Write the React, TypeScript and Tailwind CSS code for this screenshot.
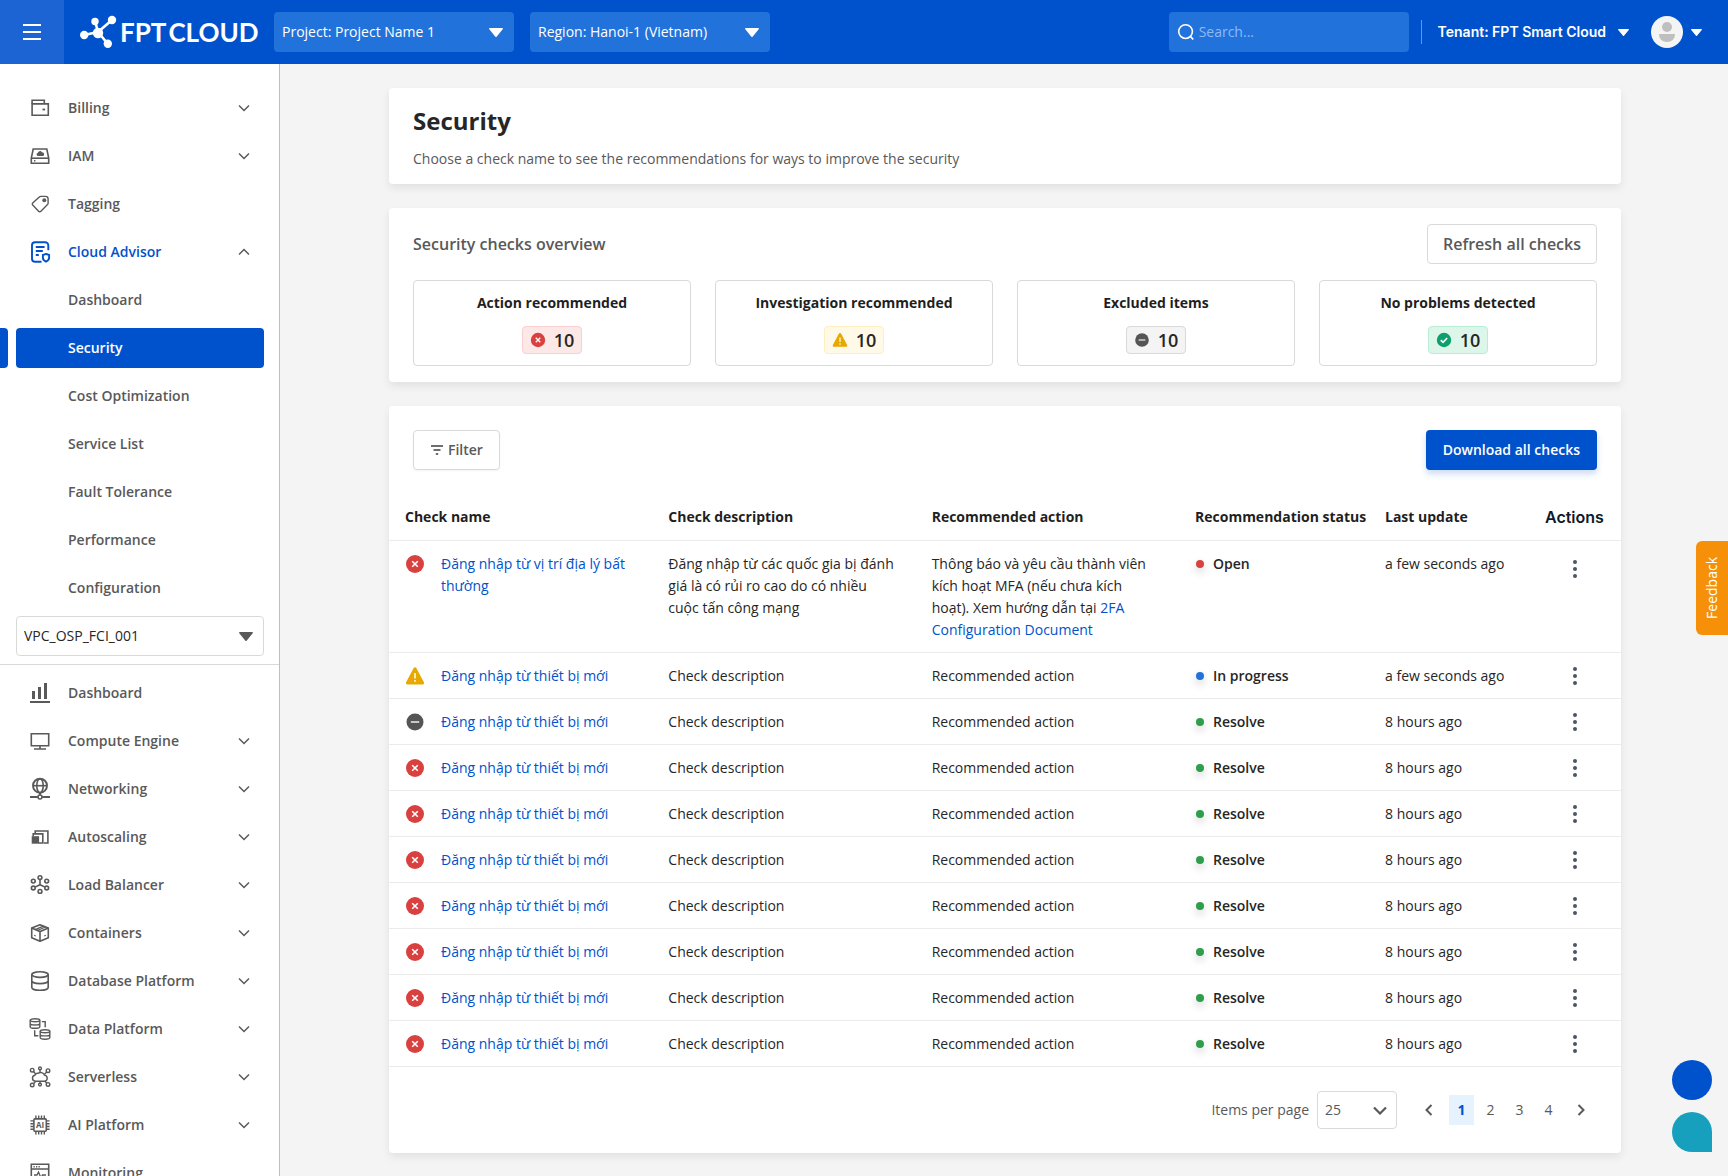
import { useState } from "react";
import type { ReactNode } from "react";

type Level = "error" | "warning" | "excluded" | "ok";
type Status = "Open" | "In progress" | "Resolve";

interface ICheck {
  id: number;
  level: Level;
  name: string;
  description: string;
  action: ReactNode;
  status: Status;
  updated: string;
  tall?: boolean;
}

interface INavItem {
  label: string;
  icon: ReactNode;
  expandable?: boolean;
}

/*********** Sidebar icons ****************/
const NavIcon = ({ children }: { children: ReactNode }) => (
  <svg
    width="24"
    height="24"
    viewBox="0 0 24 24"
    fill="none"
    stroke="currentColor"
    strokeWidth="1.6"
    className="shrink-0"
    aria-hidden="true"
  >
    {children}
  </svg>
);

const BillingIcon = () => (
  <NavIcon>
    <path d="M4.1 7.8V4.2h12.2v3.4" />
    <path d="M4.1 7.9h16.2v11.3H4.1z" />
    <path d="M14.5 12.6h2.6v1.8h-2.6z" fill="currentColor" stroke="none" />
  </NavIcon>
);

const IamIcon = () => (
  <NavIcon>
    <path d="M5.2 5h13.6l1.9 9.2v5H3.3v-5z" />
    <path d="M3.3 14.2h17.4" />
    <path
      d="M9.9 12a1.6 1.6 0 0 1-.2-3.1 2.3 2.3 0 0 1 4.3-.5 1.8 1.8 0 0 1 .6 3.6z"
      fill="currentColor"
      stroke="none"
    />
    <path d="M6 16.7h1.4" />
  </NavIcon>
);

const TagIcon = () => (
  <NavIcon>
    <path d="M12.9 4.4h4.6a2.6 2.6 0 0 1 2.6 2.6v4.2a2 2 0 0 1-.6 1.4l-6.6 6.7a1.6 1.6 0 0 1-2.3 0l-5.9-6.2a1.4 1.4 0 0 1 0-2L11.3 5.1a2.2 2.2 0 0 1 1.6-.7z" strokeWidth="1.4" />
    <circle cx="16.3" cy="8.2" r="2" fill="currentColor" stroke="none" />
  </NavIcon>
);

const AdvisorIcon = () => (
  <NavIcon>
    <g strokeWidth="1.9">
      <path d="M20.3 10.2V5.2a3 3 0 0 0-3-3H7a3 3 0 0 0-3 3v13.6a3 3 0 0 0 3 3h6.5" />
      <path d="M7.8 7h8.8M7.8 11h7M7.8 15h3" />
      <path d="M18 13.9l3.1 1.1v2.8c0 1.9-1.4 3.1-3.1 3.9-1.7-.8-3.1-2-3.1-3.9V15z" />
    </g>
  </NavIcon>
);

const BarsIcon = () => (
  <NavIcon>
    <path
      d="M4 10h3v8H4zM10 6h3v12h-3zM16 2h3v16h-3zM2 20h20v2H2z"
      fill="currentColor"
      stroke="none"
    />
  </NavIcon>
);

const MonitorIcon = () => (
  <NavIcon>
    <path d="M3.3 4.7h17.4v12H3.3z" />
    <path d="M12 16.7v3M6 20h12" />
  </NavIcon>
);

const NetworkIcon = () => (
  <NavIcon>
    <circle cx="12" cy="8.7" r="7" strokeWidth="1.9" />
    <ellipse cx="12" cy="8.7" rx="3.2" ry="7" />
    <path d="M5 8.7h14" />
    <path d="M12 15.7V18M2 20h7.8M14.2 20H22" strokeWidth="1.9" />
    <circle cx="12" cy="20" r="2" />
  </NavIcon>
);

const ScalingIcon = () => (
  <NavIcon>
    <path d="M7.2 8.5V6h12.7v12h-4.2" />
    <path d="M5.2 11.5V8.9h9.6V18h-4" />
    <path d="M3.7 11.2h7.4v7.5H3.7z" fill="currentColor" stroke="none" />
  </NavIcon>
);

const BalancerIcon = () => (
  <NavIcon>
    <circle cx="12" cy="4.6" r="1.9" />
    <circle cx="5.3" cy="8.1" r="1.9" />
    <circle cx="18.7" cy="8.1" r="1.9" />
    <circle cx="5.3" cy="15" r="1.9" />
    <circle cx="18.7" cy="15" r="1.9" />
    <circle cx="12" cy="18.4" r="1.9" />
    <path d="M12 6.5v5.2M7 14.1l5-2.4 5 2.4" />
  </NavIcon>
);

const ContainerIcon = () => (
  <NavIcon>
    <path d="M12 3.7l8.3 3.4v9.6L12 20.3l-8.3-3.600V7.100z" strokeLinejoin="round" />
    <path d="M3.700 7.100l8.300 3.500 8.300-3.500M12 10.600v9.700" />
    <path d="M7.200 8.700l8.200-3.500M9.300 9.500l8.200-3.500" strokeWidth="1.300" />
    <path d="M6.200 14.300l1.500.7M17.800 14.300l-1.500.7" strokeWidth="1.200" />
  </NavIcon>
);

const DatabaseIcon = () => (
  <NavIcon>
    <ellipse cx="12" cy="5.600" rx="8.200" ry="2.800" />
    <path d="M3.800 5.600v12.800c0 1.600 3.700 2.800 8.200 2.800s8.200-1.200 8.200-2.800V5.600M3.800 11.800c0 1.600 3.700 2.800 8.200 2.800s8.200-1.200 8.200-2.800" />
  </NavIcon>
);

const DataPlatformIcon = () => (
  <NavIcon>
    <g strokeWidth="1.400">
      <ellipse cx="7" cy="3.300" rx="4.800" ry="1.500" />
      <path d="M2.200 3.300v6.400c0 .9 2.100 1.600 4.800 1.600s4.800-.7 4.800-1.600V3.300M2.200 6.500C2.200 7.400 4.300 8 7 8s4.800-.6 4.800-1.500" />
      <ellipse cx="17" cy="14.200" rx="4.800" ry="1.500" />
      <path d="M12.200 14.200v6.400c0 .9 2.100 1.600 4.800 1.600s4.800-.7 4.800-1.600v-6.400M12.200 17.400c0 .9 2.100 1.500 4.800 1.500s4.800-.6 4.800-1.500" />
      <path d="M13.800 4.600h3.400v5.700M6.700 13.200v5.600h3.600" />
    </g>
  </NavIcon>
);

const ServerlessIcon = () => (
  <NavIcon>
    <g strokeWidth="1.400">
      <path d="M7.200 16.200a3 3 0 0 1-.4-5.900 3 3 0 0 1 3.400-2 4 4 0 0 1 6.200 1.800 3.100 3.100 0 0 1 .4 6.100z" />
      <circle cx="4.200" cy="5.200" r="1.800" />
      <circle cx="12" cy="3.400" r="1.400" />
      <circle cx="20" cy="5.700" r="1.800" />
      <circle cx="4.200" cy="20" r="1.800" />
      <circle cx="12" cy="19.600" r="1.400" />
      <circle cx="20" cy="19.400" r="1.800" />
      <path d="M5.500 6.500l2 2.300M12 4.800v3M18.800 7l-2.300 2.200M5.500 18.700l2.200-2.500M12 18.200v-2M18.700 18.100l-2-2" />
    </g>
  </NavIcon>
);

const AiIcon = () => (
  <NavIcon>
    <rect x="5.900" y="5.900" width="12.400" height="12.400" rx="1" />
    <path
      d="M7.900 5.500V2.600M10.700 5.500V2.600M13.500 5.500V2.600M16.300 5.500V2.600M7.900 21.600v-3M10.700 21.600v-3M13.500 21.600v-3M16.300 21.600v-3M2.400 7.900h3M2.400 10.700h3M2.400 13.500h3M2.400 16.300h3M18.600 7.900h3M18.600 10.700h3M18.600 13.500h3M18.600 16.300h3"
      strokeWidth="1.400"
    />
    <text
      x="12.100"
      y="14.900"
      textAnchor="middle"
      fontSize="8"
      fontWeight="700"
      fontFamily="Open Sans"
      fill="currentColor"
      stroke="none"
    >
      AI
    </text>
  </NavIcon>
);

const MonitoringIcon = () => (
  <NavIcon>
    <path d="M3.300 3.300h17.400v17.400H3.300zM3.300 8h17.400" />
    <path d="M5.500 5.700h1.300M8 5.700h1.300M10.500 5.700h1.300" />
    <path d="M6 14h3l1.500-3 2.500 6 1.500-3H18" strokeWidth="1.300" />
  </NavIcon>
);

/*********** Shared glyphs ****************/
const Caret = ({ small, className = "" }: { small?: boolean; className?: string }) => (
  <svg
    width={small ? 11 : 14}
    height={small ? 7 : 9}
    viewBox="0 0 14 8"
    preserveAspectRatio="none"
    fill="currentColor"
    className={className}
    aria-hidden="true"
  >
    <path d="M.8 0h12.4c.7 0 1 .7.5 1.200L7.600 7.700a.8.8 0 0 1-1.200 0L.3 1.200C-.2.700.1 0 .8 0z" />
  </svg>
);

const Chevron = ({ up }: { up?: boolean }) => (
  <svg
    width="12"
    height="8"
    viewBox="0 0 12 8"
    fill="none"
    stroke="#595959"
    strokeWidth="1.500"
    className="shrink-0"
    aria-hidden="true"
  >
    <path d={up ? "M1 6.500l5-5 5 5" : "M1 1.500l5 5 5-5"} />
  </svg>
);

const LevelIcon = ({ level, size }: { level: Level; size: number }) => (
  <svg width={size} height={size} viewBox="0 0 20 20" className="shrink-0" aria-hidden="true">
    {level === "error" && (
      <>
        <circle cx="10" cy="10" r="9" fill="#d94141" />
        <path d="M7.200 7.200l5.600 5.600M12.800 7.200l-5.600 5.600" stroke="#fff" strokeWidth="1.600" />
      </>
    )}
    {level === "warning" && (
      <>
        <path
          d="M8.700 1.900a1.500 1.500 0 0 1 2.600 0l7.600 14.400a1.500 1.500 0 0 1-1.300 2.200H2.400a1.500 1.500 0 0 1-1.300-2.200z"
          fill="#e9a800"
        />
        <path d="M10 7v5.500M10 14v1.800" stroke="#fff" strokeWidth="1.500" />
      </>
    )}
    {level === "excluded" && (
      <>
        <circle cx="10" cy="10" r="8.500" fill="#555" />
        <path d="M5.800 10h8.400" stroke="#c8c8c8" strokeWidth="2" />
      </>
    )}
    {level === "ok" && (
      <>
        <circle cx="10" cy="10" r="9" fill="#0f9f6e" />
        <path d="M6 10.200l2.800 2.800 5.200-5.500" fill="none" stroke="#fff" strokeWidth="2" />
      </>
    )}
  </svg>
);

const Logo = () => (
  <a href="#home" className="flex items-center gap-0.5 text-white">
    <svg width="38" height="34" viewBox="0 0 38 34" fill="currentColor" aria-hidden="true">
      <path
        d="M18 17L4.200 20M18 17L15 6M18 17L32 5M18 17l9.500 11.500"
        stroke="currentColor"
        strokeWidth="2.600"
      />
      <circle cx="4.200" cy="20" r="4.200" />
      <circle cx="15" cy="6.500" r="3.700" />
      <circle cx="32" cy="5" r="4.200" />
      <circle cx="27.800" cy="28.800" r="4.200" />
      <circle cx="18" cy="18" r="5.200" />
    </svg>
    <span className="flex gap-0.5 font-['Lato',sans-serif] text-[26px] leading-8 font-bold">
      <span>FPT</span>
      <span>CLOUD</span>
    </span>
  </a>
);

/*********** Data ****************/
const topNav: INavItem[] = [
  { label: "Billing", icon: <BillingIcon />, expandable: true },
  { label: "IAM", icon: <IamIcon />, expandable: true },
  { label: "Tagging", icon: <TagIcon /> },
];

const advisorNav = [
  "Dashboard",
  "Security",
  "Cost Optimization",
  "Service List",
  "Fault Tolerance",
  "Performance",
  "Configuration",
];

const vpcNav: INavItem[] = [
  { label: "Dashboard", icon: <BarsIcon /> },
  { label: "Compute Engine", icon: <MonitorIcon />, expandable: true },
  { label: "Networking", icon: <NetworkIcon />, expandable: true },
  { label: "Autoscaling", icon: <ScalingIcon />, expandable: true },
  { label: "Load Balancer", icon: <BalancerIcon />, expandable: true },
  { label: "Containers", icon: <ContainerIcon />, expandable: true },
  { label: "Database Platform", icon: <DatabaseIcon />, expandable: true },
  { label: "Data Platform", icon: <DataPlatformIcon />, expandable: true },
  { label: "Serverless", icon: <ServerlessIcon />, expandable: true },
  { label: "AI Platform", icon: <AiIcon />, expandable: true },
  { label: "Monitoring", icon: <MonitoringIcon /> },
];

const summary: { label: string; level: Level; count: number; badge: string }[] = [
  { label: "Action recommended", level: "error", count: 10, badge: "bg-[#fde8e8] border-[#f9d0d0]" },
  { label: "Investigation recommended", level: "warning", count: 10, badge: "bg-[#fff9e8] border-[#ffeec0]" },
  { label: "Excluded items", level: "excluded", count: 10, badge: "bg-[#f4f4f4] border-[#d9d9d9]" },
  { label: "No problems detected", level: "ok", count: 10, badge: "bg-[#dcf7ea] border-[#b8eed6]" },
];

const simpleCheck = (id: number, level: Level, status: Status, updated: string): ICheck => ({
  id,
  level,
  name: "Đăng nhập từ thiết bị mới",
  description: "Check description",
  action: "Recommended action",
  status,
  updated,
});

const checks: ICheck[] = [
  {
    id: 1,
    level: "error",
    name: "Đăng nhập từ vị trí địa lý bất thường",
    description: "Đăng nhập từ các quốc gia bị đánh giá là có rủi ro cao do có nhiều cuộc tấn công mạng",
    action: (
      <>
        Thông báo và yêu cầu thành viên kích hoạt MFA (nếu chưa kích hoạt). Xem hướng dẫn tại{" "}
        <a href="#2fa" className="text-[#0052cc]">
          2FA Configuration Document
        </a>
      </>
    ),
    status: "Open",
    updated: "a few seconds ago",
    tall: true,
  },
  simpleCheck(2, "warning", "In progress", "a few seconds ago"),
  simpleCheck(3, "excluded", "Resolve", "8 hours ago"),
  simpleCheck(4, "error", "Resolve", "8 hours ago"),
  simpleCheck(5, "error", "Resolve", "8 hours ago"),
  simpleCheck(6, "error", "Resolve", "8 hours ago"),
  simpleCheck(7, "error", "Resolve", "8 hours ago"),
  simpleCheck(8, "error", "Resolve", "8 hours ago"),
  simpleCheck(9, "error", "Resolve", "8 hours ago"),
  simpleCheck(10, "error", "Resolve", "8 hours ago"),
];

const dotColor: Record<Status, string> = {
  Open: "bg-[#d94141]",
  "In progress": "bg-[#2272db]",
  Resolve: "bg-[#2e9e4b]",
};

/*********** Header ****************/
const HeaderSelect = ({ label, value }: { label: string; value: string }) => (
  <div className="relative w-60 shrink-0">
    <select
      aria-label={label}
      className="h-10 w-full appearance-none rounded bg-[#2272db] pr-8 pl-2 text-sm text-white"
    >
      <option>{value}</option>
    </select>
    <Caret className="pointer-events-none absolute top-4 right-[11px] text-white" />
  </div>
);

const Header = () => (
  <header className="flex h-16 shrink-0 items-center bg-[#0052cc]">
    <button aria-label="Menu" className="flex size-16 shrink-0 items-center justify-center bg-[#1c63d3]">
      <svg width="18" height="16" viewBox="0 0 18 16" fill="#fff" aria-hidden="true">
        <path d="M0 0h18v2H0zM0 7h18v2H0zM0 14h18v2H0z" />
      </svg>
    </button>
    <div className="flex w-[210px] shrink-0 items-center pl-4">
      <Logo />
    </div>
    <div className="flex gap-4">
      <HeaderSelect label="Project" value="Project: Project Name 1" />
      <HeaderSelect label="Region" value="Region: Hanoi-1 (Vietnam)" />
    </div>
    <div className="ml-auto flex items-center pr-[26px]">
      <label className="flex h-10 w-60 items-center gap-1 rounded bg-[#2272db] px-2">
        <svg width="20" height="20" viewBox="0 0 20 20" fill="none" stroke="#fff" strokeWidth="1.700" aria-hidden="true">
          <circle cx="9.500" cy="9.500" r="7.600" />
          <path d="M15 15l3 3.300" strokeWidth="2" />
        </svg>
        <input
          type="text"
          aria-label="Search"
          placeholder="Search..."
          className="w-full bg-transparent text-sm text-white outline-none placeholder:text-[#8dbaf5]"
        />
      </label>
      <span className="ml-3 h-6 w-px bg-[#5c9bec]" />
      <button className="ml-4 flex items-center gap-3 font-['Inter',sans-serif] text-sm font-semibold text-white">
        Tenant: FPT Smart Cloud
        <Caret small />
      </button>
      <button aria-label="Account" className="ml-[22px] flex items-center gap-2 text-white">
        <svg width="32" height="32" viewBox="0 0 32 32" aria-hidden="true">
          <circle cx="16" cy="16" r="16" fill="#f4f4f4" />
          <circle cx="16" cy="11" r="5" fill="#bfbfbf" />
          <path d="M8.500 18h15c.3 0 .5.200.5.500 0 4.500-3.500 7.500-8 7.500s-8-3-8-7.500c0-.3.200-.5.500-.5z" fill="#bfbfbf" />
        </svg>
        <Caret small />
      </button>
    </div>
  </header>
);

/*********** Sidebar ****************/
const NavRow = ({ item }: { item: INavItem }) => (
  <a href={`#${item.label}`} className="flex h-12 shrink-0 items-center pr-[29px] pl-7">
    {item.icon}
    <span className="ml-4 flex-1">{item.label}</span>
    {item.expandable && <Chevron />}
  </a>
);

const Sidebar = () => {
  const [active, setActive] = useState("Security");
  return (
    <aside className="flex w-[280px] shrink-0 flex-col overflow-y-auto border-r border-[#bfbfbf] bg-white pt-5 text-sm font-semibold text-[#595959] [scrollbar-width:none]">
      <nav className="flex flex-col">
        {topNav.map((item) => (
          <NavRow key={item.label} item={item} />
        ))}
        <a href="#advisor" className="flex h-12 items-center pr-[29px] pl-7 text-[#0052cc]">
          <AdvisorIcon />
          <span className="ml-4 flex-1">Cloud Advisor</span>
          <Chevron up />
        </a>
        {advisorNav.map((label) => (
          <div key={label} className="flex h-12 items-center gap-2">
            <span className={`h-10 w-2 rounded-r ${active === label ? "bg-[#0052cc]" : ""}`} />
            <button
              onClick={() => setActive(label)}
              className={`mr-[15px] h-10 flex-1 rounded pl-[52px] text-left ${
                active === label ? "bg-[#0052cc] text-white" : ""
              }`}
            >
              {label}
            </button>
          </div>
        ))}
      </nav>
      <div className="border-b border-[#d9d9d9] pt-1 pr-[15px] pb-2 pl-4">
        <div className="relative">
          <select
            aria-label="VPC"
            className="h-10 w-full appearance-none rounded border border-[#d9d9d9] bg-white pr-8 pl-[7px] font-normal text-[#262626]"
          >
            <option>VPC_OSP_FCI_001</option>
          </select>
          <Caret className="pointer-events-none absolute top-4 right-[11px] text-[#595959]" />
        </div>
      </div>
      <nav className="flex flex-col pt-1">
        {vpcNav.map((item) => (
          <NavRow key={item.label} item={item} />
        ))}
      </nav>
    </aside>
  );
};

/*********** Content ****************/
const Overview = () => (
  <section className="rounded bg-white px-6 py-4 shadow-[0_4px_8px_rgba(0,0,0,0.08)]">
    <div className="flex items-center justify-between">
      <h2 className="text-base font-semibold text-[#595959]">Security checks overview</h2>
      <button className="h-10 rounded border border-[#d9d9d9] px-[15px] text-base font-semibold text-[#595959]">
        Refresh all checks
      </button>
    </div>
    <div className="mt-4 grid grid-cols-4 gap-6">
      {summary.map((item) => (
        <div
          key={item.label}
          className="flex flex-col items-center rounded border border-[#d9d9d9] px-4 py-[11px]"
        >
          <h3 className="text-sm leading-[22px] font-bold text-[#1f1f1f]">{item.label}</h3>
          <div className={`mt-3 flex h-7 items-center gap-2 rounded border px-[7px] ${item.badge}`}>
            <LevelIcon level={item.level} size={16} />
            <span className="text-lg font-semibold text-[#262626]">{item.count}</span>
          </div>
        </div>
      ))}
    </div>
  </section>
);

const CheckRow = ({ check }: { check: ICheck }) => (
  <tr className="border-b border-[#ebebeb] align-top">
    <td className="px-4 pt-3 pb-[11px]">
      <div className="flex gap-4">
        <span className="flex h-[22px] items-center">
          <LevelIcon level={check.level} size={20} />
        </span>
        <a href={`#check-${check.id}`} className="text-[#0052cc]">
          {check.name}
        </a>
      </div>
    </td>
    <td className="px-4 pt-3 pb-[11px]">{check.description}</td>
    <td className="px-4 pt-3 pb-[11px]">{check.action}</td>
    <td className="px-4 pt-3 pb-[11px]">
      <div className="flex items-center gap-[9px] px-px font-semibold">
        <span className={`size-2 rounded-full shadow-[0_4px_8px_rgba(0,0,0,0.2)] ${dotColor[check.status]}`} />
        {check.status}
      </div>
    </td>
    <td className="px-4 pt-3 pb-[11px]">{check.updated}</td>
    <td className={check.tall ? "px-4 pt-3" : "px-4 pt-[7px]"}>
      <button aria-label="Row actions" className="mx-auto flex size-8 items-center justify-center">
        <svg width="4" height="18" viewBox="0 0 4 18" fill="#4b5563" aria-hidden="true">
          <circle cx="2" cy="2" r="2" />
          <circle cx="2" cy="9" r="2" />
          <circle cx="2" cy="16" r="2" />
        </svg>
      </button>
    </td>
  </tr>
);

const Pagination = () => {
  const [page, setPage] = useState(1);
  return (
    <div className="flex h-[86px] items-center justify-end pr-7 text-sm text-[#595959]">
      <label htmlFor="page-size">Items per page</label>
      <div className="relative ml-2">
        <select
          id="page-size"
          className="h-[38px] w-20 appearance-none rounded border border-[#d9d9d9] bg-white pl-[7px]"
        >
          <option>25</option>
        </select>
        <svg
          width="14"
          height="9"
          viewBox="0 0 14 9"
          fill="none"
          stroke="#595959"
          strokeWidth="2.200"
          className="pointer-events-none absolute top-[15px] right-[10px]"
          aria-hidden="true"
        >
          <path d="M1 1.500l6 6 6-6" />
        </svg>
      </div>
      <button aria-label="Previous page" className="ml-5 flex size-6 items-center justify-center">
        <svg width="8" height="12" viewBox="0 0 8 12" fill="none" stroke="#595959" strokeWidth="2" aria-hidden="true">
          <path d="M6.500 1l-5 5 5 5" />
        </svg>
      </button>
      <div className="mx-2 flex gap-1">
        {[1, 2, 3, 4].map((n) => (
          <button
            key={n}
            onClick={() => setPage(n)}
            className={`h-[30px] w-[25px] ${page === n ? "bg-[#e6f3ff] font-bold text-[#0052cc]" : ""}`}
          >
            {n}
          </button>
        ))}
      </div>
      <button aria-label="Next page" className="flex size-6 items-center justify-center">
        <svg width="8" height="12" viewBox="0 0 8 12" fill="none" stroke="#595959" strokeWidth="2" aria-hidden="true">
          <path d="M1.500 1l5 5-5 5" />
        </svg>
      </button>
    </div>
  );
};

const ChecksTable = () => (
  <section className="rounded bg-white shadow-[0_4px_8px_rgba(0,0,0,0.08)]">
    <div className="flex items-center justify-between p-6">
      <button className="flex h-10 items-center gap-1 rounded border border-[#d9d9d9] px-4 text-sm font-semibold text-[#595959] shadow-xs">
        <svg width="14" height="12" viewBox="0 0 14 12" stroke="#404040" strokeWidth="1.500" aria-hidden="true">
          <path d="M1 2h12M3.500 6h7M5.800 10h2.400" />
        </svg>
        Filter
      </button>
      <button className="h-10 rounded bg-[#0052cc] px-[17px] text-sm font-semibold text-white shadow-[0_4px_6px_rgba(0,82,204,0.2)]">
        Download all checks
      </button>
    </div>
    <table className="w-full table-fixed text-sm leading-[22px] text-[#262626]">
      <colgroup>
        <col />
        <col />
        <col />
        <col className="w-[190px]" />
        <col className="w-40" />
        <col className="w-[92px]" />
      </colgroup>
      <thead>
        <tr className="h-[46px] border-b border-[#ebebeb] text-left whitespace-nowrap text-[#1f1f1f]">
          <th className="px-4 font-bold">Check name</th>
          <th className="px-4 font-bold">Check description</th>
          <th className="px-4 font-bold">Recommended action</th>
          <th className="pl-4 font-bold">Recommendation status</th>
          <th className="px-4 font-bold">Last update</th>
          <th className="pl-4 font-['Inter',sans-serif] text-base font-semibold text-[#111827]">Actions</th>
        </tr>
      </thead>
      <tbody>
        {checks.map((check) => (
          <CheckRow key={check.id} check={check} />
        ))}
      </tbody>
    </table>
    <Pagination />
  </section>
);

const App = () => {
  return (
    <div className="flex h-screen flex-col overflow-hidden bg-[#f4f4f4] font-['Open_Sans',sans-serif]">
      <Header />
      <div className="flex min-h-0 flex-1">
        <Sidebar />
        <main className="flex min-w-0 flex-1 flex-col gap-6 overflow-y-auto pt-6 pr-[107px] pb-6 pl-[109px] [scrollbar-width:none]">
          <section className="rounded bg-white px-6 pt-[15px] pb-[13px] shadow-[0_4px_8px_rgba(0,0,0,0.08)]">
            <h1 className="text-2xl leading-9 font-bold text-[#262626]">Security</h1>
            <p className="mt-2 text-sm leading-6 text-[#595959]">
              Choose a check name to see the recommendations for ways to improve the security
            </p>
          </section>
          <Overview />
          <ChecksTable />
        </main>
      </div>

      <button className="fixed top-[541px] right-0 flex h-[94px] w-8 items-center justify-center rounded-l-md bg-[#f79009] text-sm text-white">
        <span className="rotate-180 [writing-mode:vertical-rl]">Feedback</span>
      </button>
      <div className="fixed right-4 bottom-6 flex flex-col gap-3">
        <button aria-label="Support" className="size-10 rounded-full bg-[#0052cc]" />
        <button aria-label="Chat" className="size-10 rounded-full rounded-br-none bg-[#179fbe]" />
      </div>
    </div>
  );
};

export default App;
